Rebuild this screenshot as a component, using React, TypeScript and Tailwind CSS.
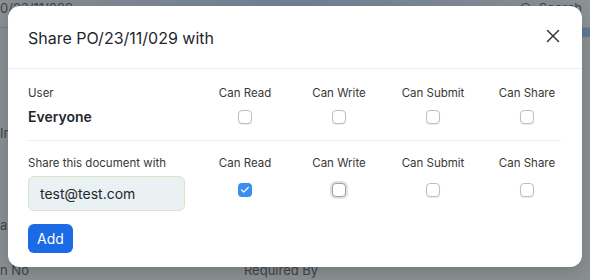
import { X, Check } from 'lucide-react';

const cols = ['Can Read', 'Can Write', 'Can Submit', 'Can Share'];

function Box({ checked = false, focused = false }: { checked?: boolean; focused?: boolean }) {
  if (checked) {
    return (
      <span className="w-[14px] h-[14px] rounded-[4px] bg-[#3a8ef0] flex items-center justify-center">
        <Check size={10} strokeWidth={3} className="text-white" />
      </span>
    );
  }
  return (
    <span
      className={
        'w-[14px] h-[14px] rounded-[4px] border bg-white shadow-[0_1px_1px_rgba(0,0,0,0.08)] ' +
        (focused ? 'border-[#9aa1a7] ring-2 ring-[#dfe2e5]' : 'border-[#b9bfc5]')
      }
    />
  );
}

function PermRow({ label, checks, top }: { label: React.ReactNode; checks: React.ReactNode[]; top?: boolean }) {
  return (
    <div className={'grid grid-cols-[170px_94px_94px_94px_94px] ' + (top ? 'items-start' : 'items-center')}>
      {label}
      {checks.map((c, i) => (
        <div key={i} className={'flex justify-center ' + (top ? 'pt-[7px]' : '')}>
          {c}
        </div>
      ))}
    </div>
  );
}

function Header({ label }: { label: string }) {
  return (
    <div className="grid grid-cols-[170px_94px_94px_94px_94px] text-[11.5px] text-[#383838] leading-4">
      <span>{label}</span>
      {cols.map((c) => (
        <span key={c} className="text-center">
          {c}
        </span>
      ))}
    </div>
  );
}

export default function App() {
  return (
    <div
      className="relative w-[590px] h-[280px] overflow-hidden bg-[#898e91] text-[#1f272e]"
      style={{ fontFamily: 'Inter, "Noto Sans", sans-serif' }}
    >
      {/* dimmed page behind */}
      <div className="h-full flex flex-col text-[13px] leading-4 text-[#3f4448]">
        <div className="h-[28px] flex justify-between bg-gradient-to-r from-[#8a8f92] via-[#718196] to-[#8d9295] border-b border-[#7c8184]">
          <span>0/23/11/029</span>
          <span className="flex items-center gap-2 pr-2 self-start">
            <span className="w-[11px] h-[11px] rounded-full border-[1.5px] border-[#3f4448]" />
            Search
          </span>
        </div>
        <div className="h-[9px] ml-auto w-[28px] bg-[#5e7895]" />
        <div className="flex-1 flex">
          <div className="w-[20px] flex flex-col pt-[88px] gap-[76px]">
            <span>Ir</span>
            <span>a</span>
          </div>
          <div className="flex-1" />
          <div className="w-[28px] pt-[30px]">tu</div>
        </div>
        <div className="h-[18px] flex gap-[215px]">
          <span>n No</span>
          <span>Required By</span>
        </div>
      </div>

      {/* modal */}
      <div className="absolute left-[8px] top-[6px] w-[574px] h-[261px] bg-white rounded-[12px] shadow-[0_4px_16px_rgba(0,0,0,0.15)] flex flex-col">
        <div className="h-[63px] flex items-center justify-between pl-[20px] pr-[18px] border-b border-[#ebeef0]">
          <h2 className="text-[16px] leading-6 text-[#1f272e] pt-[1px]">Share PO/23/11/029 with</h2>
          <X size={22} strokeWidth={1.6} className="text-[#383838] -mt-[3px]" />
        </div>

        <div className="px-[20px] pt-[16px]">
          <Header label="User" />
          <div className="mt-[5px]">
            <PermRow
              label={<span className="text-[14px] font-semibold text-[#1f272e]">Everyone</span>}
              checks={[<Box />, <Box />, <Box />, <Box />]}
            />
          </div>
          <div className="h-px bg-[#ebeef0] mt-[13px] w-[533px]" />

          <div className="pt-[14px]">
            <Header label="Share this document with" />
            <div className="mt-[5px]">
              <PermRow
                top
                label={
                  <div className="w-[157px] h-[35px] rounded-[6px] bg-[#e9f1f2] border border-[#dde4c6] flex items-center px-[11px] text-[14px] text-[#1f272e]">
                    test@test.com
                  </div>
                }
                checks={[<Box checked />, <Box focused />, <Box />, <Box />]}
              />
            </div>
            <button className="mt-[13px] w-[45px] h-[29px] rounded-[6px] bg-[#1b6ae6] text-white text-[14px] flex items-center justify-center">
              Add
            </button>
          </div>
        </div>
      </div>
    </div>
  );
}
